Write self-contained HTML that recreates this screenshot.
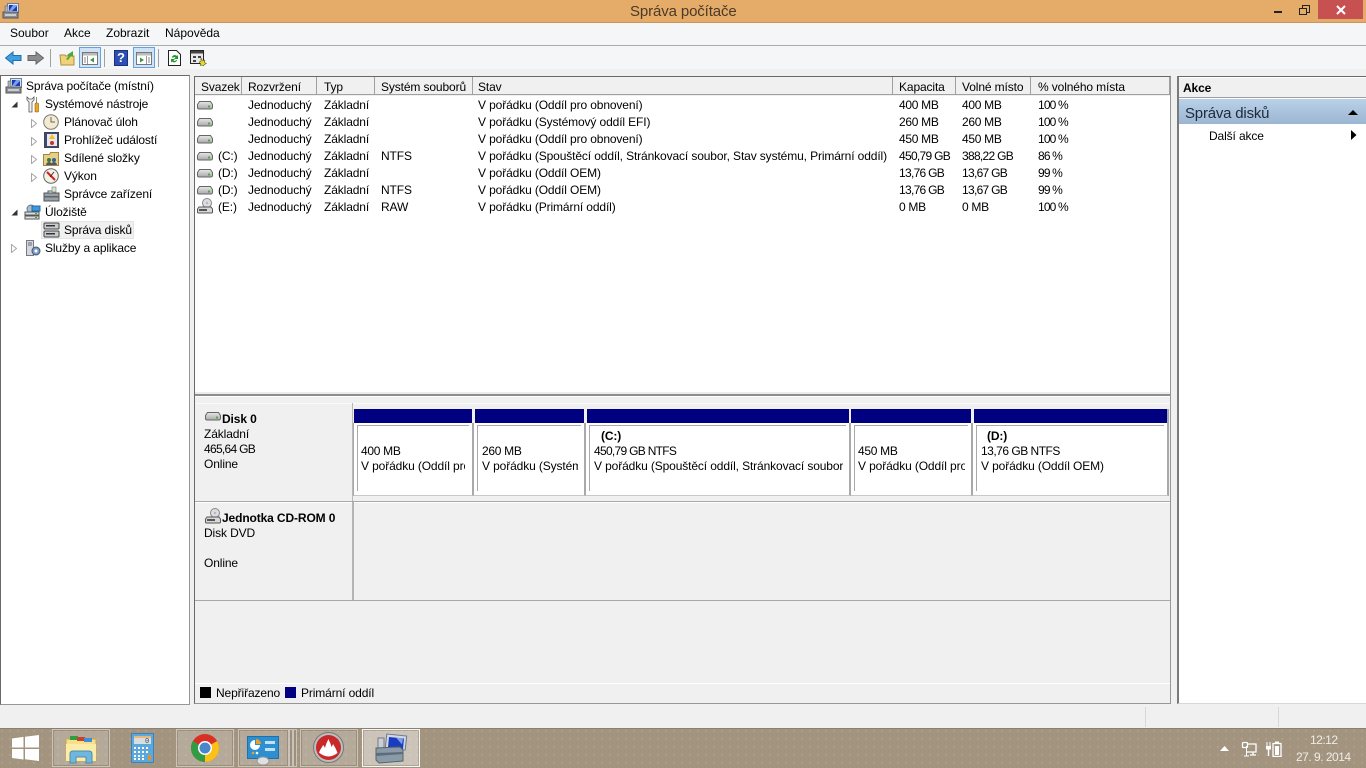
<!DOCTYPE html>
<html lang="cs"><head><meta charset="utf-8"><title>Správa počítače</title>
<style>
html,body{margin:0;padding:0;width:1366px;height:768px;overflow:hidden;background:#f0f0f0}
body{font:12px "Liberation Sans",sans-serif;color:#000;position:relative}
div,span,svg{position:absolute}
.t{white-space:nowrap;line-height:15px;height:15px;letter-spacing:-.12px}
.m{letter-spacing:0}
.n{letter-spacing:-.7px}
.s{letter-spacing:-.3px}
.p{letter-spacing:-.85px}
.c{overflow:hidden}
.b{font-weight:bold}
.hd{top:77px;height:18px;background:#f0f0f0;border-right:1px solid #a0a0a0;border-bottom:1px solid #a0a0a0;box-sizing:border-box}
.tb{top:729px;height:38px;background:rgba(255,255,255,.2);border:1px solid rgba(255,255,255,.32);outline:1px solid rgba(80,70,55,.25);outline-offset:-2px;box-sizing:border-box}
.navy{background:#000080;top:409px;height:14px}
.part{top:423px;height:73px;background:#fff;border-right:2px solid #a9a9a9;border-bottom:1px solid #c8c8c8;box-sizing:border-box}
.in{left:3px;top:2px;right:3px;bottom:4px;border-left:1px solid #a9a9a9;border-top:1px solid #a9a9a9}
</style></head><body>
<svg width="0" height="0" style="left:0;top:0">
<defs>
<linearGradient id="hd" x1="0" y1="0" x2="0" y2="1"><stop offset="0" stop-color="#e8e8e8"/><stop offset="1" stop-color="#a8a8a8"/></linearGradient>
<symbol id="disk" viewBox="0 0 16 9"><path d="M2.500 .5h11l2 3v3a1.500 1.500 0 0 1-1.500 1.500H2A1.500 1.500 0 0 1 .5 6.500v-3z" fill="url(#hd)" stroke="#666"/><rect x="11" y="4.500" width="2" height="2" fill="#4caf3c"/></symbol>
<symbol id="cd" viewBox="0 0 16 16"><circle cx="10" cy="5" r="4.500" fill="#ddd" stroke="#888"/><circle cx="10" cy="5" r="1.200" fill="#c8a8d8"/><path d="M2 9h12l1.500 2v3a1 1 0 0 1-1 1H1.500a1 1 0 0 1-1-1v-3z" fill="#d8d8d8" stroke="#555"/><rect x="2" y="11" width="8" height="2" fill="#555"/></symbol>
<symbol id="mgmt" viewBox="0 0 17 16"><rect x="5.500" y=".5" width="11" height="9" fill="#dbe7f5" stroke="#6a7f99"/><rect x="7" y="2" width="8" height="6" fill="#1838b8"/><path d="M7 8l4-6h4v1l-5 5z" fill="#7aa0e8"/><rect x="1" y="9" width="15" height="6" fill="#8a9098" stroke="#555"/><rect x="3" y="3" width="3" height="6" fill="#aab2b8" stroke="#666" stroke-width=".6"/><rect x="3" y="11" width="11" height="2" fill="#c8ced4"/></symbol>
<symbol id="tool" viewBox="0 0 17 16"><rect x="1" y="7" width="15" height="8" fill="#98a0a8" stroke="#555"/><path d="M5 7V5h7v2" fill="none" stroke="#555"/><rect x="1" y="10" width="15" height="1.500" fill="#5e656c"/><rect x="9" y="1" width="4" height="5" fill="#d5e8c8" stroke="#777" stroke-width=".6"/></symbol>
</defs></svg>

<!-- Title bar -->
<div style="left:0;top:0;width:1366px;height:23px;background:#e5ab68;border-bottom:1px solid #c9965b;box-sizing:border-box"></div>
<svg style="left:2px;top:3px" width="17" height="16"><use href="#mgmt"/></svg>
<div class="t" style="left:630px;top:3px;font-size:15px;line-height:18px;height:18px;color:#4a3a28">Správa počítače</div>
<div style="left:1274px;top:11px;width:8px;height:2px;background:#222"></div>
<div style="left:1302px;top:5px;width:6px;height:6px;border:1px solid #222"></div>
<div style="left:1299px;top:8px;width:6px;height:5px;border:1.500px solid #222;background:#e5ab68"></div>
<div style="left:1318px;top:0;width:45px;height:19px;background:#c75050"></div>
<svg style="left:1336px;top:5px" width="10" height="10"><path d="M1 1l8 8M9 1l-8 8" stroke="#fff" stroke-width="2"/></svg>

<!-- Menu -->
<div style="left:0;top:23px;width:1366px;height:23px;background:#f5f6f7;border-bottom:1px solid #acacac;box-sizing:border-box"></div>
<div class="t m" style="left:10px;top:26px">Soubor</div>
<div class="t m" style="left:64px;top:26px">Akce</div>
<div class="t m" style="left:106px;top:26px">Zobrazit</div>
<div class="t m" style="left:165px;top:26px">Nápověda</div>

<!-- Toolbar -->
<div style="left:0;top:46px;width:1366px;height:23px;background:#f5f6f7"></div>
<svg style="left:5px;top:51px" width="17" height="14"><path d="M.5 7L8 1v3.500h8v5H8V13z" fill="#3f9fe0" stroke="#1f6fb0"/></svg>
<svg style="left:27px;top:51px" width="17" height="14"><path d="M16.500 7L9 1v3.500H1v5h8V13z" fill="#8c8c8c" stroke="#666"/></svg>
<div style="left:50px;top:49px;width:1px;height:18px;background:#a0a0a0"></div>
<svg style="left:59px;top:50px" width="17" height="16"><path d="M1 5h5l1 1h8v9H2z" fill="#f0d27a" stroke="#b09040"/><path d="M7 9l3-3-2-1 6-4v6l-2-1-3 4z" fill="#4aa83c"/></svg>
<div style="left:79px;top:47px;width:22px;height:21px;background:#cfe3f7;border:1px solid #62a2e4;box-sizing:border-box"></div>
<svg style="left:82px;top:52px" width="16" height="13"><rect x=".5" y=".5" width="15" height="12" fill="#fff" stroke="#777"/><rect x="1" y="1" width="14" height="2.500" fill="#bbb"/><path d="M5.500 4v8" stroke="#999"/><path d="M12 5.500v5l-4-2.500z" fill="#3a9a3a"/><path d="M2 6h2M2 8h2M2 10h2" stroke="#888"/></svg>
<div style="left:104px;top:49px;width:1px;height:18px;background:#a0a0a0"></div>
<div style="left:114px;top:50px;width:14px;height:16px;background:#2c4fb4;border:1px solid #1a2f80;box-sizing:border-box;color:#fff;font:bold 13px/14px 'Liberation Sans',sans-serif;text-align:center">?</div>
<div style="left:133px;top:47px;width:22px;height:21px;background:#cfe3f7;border:1px solid #62a2e4;box-sizing:border-box"></div>
<svg style="left:136px;top:52px" width="16" height="13"><rect x=".5" y=".5" width="15" height="12" fill="#fff" stroke="#777"/><rect x="1" y="1" width="14" height="2.500" fill="#bbb"/><path d="M10.500 4v8" stroke="#999"/><path d="M4 5.500v5l4-2.500z" fill="#3a9a3a"/><path d="M12 6h2M12 8h2M12 10h2" stroke="#888"/></svg>
<div style="left:158px;top:49px;width:1px;height:18px;background:#a0a0a0"></div>
<svg style="left:168px;top:50px" width="13" height="16"><path d="M.5.5h8l4 4v11H.5z" fill="#fff" stroke="#222"/><path d="M4 7a3 3 0 0 1 5-1l1-1v4H6l1.500-1.500A1.500 1.500 0 0 0 5 8zM9 10a3 3 0 0 1-5 1.500L3 12.500V9h4l-1.500 1.500A1.500 1.500 0 0 0 8 10z" fill="#1f9a30"/></svg>
<svg style="left:190px;top:50px" width="17" height="16"><rect x=".5" y=".5" width="13" height="13" fill="#e8e8e8" stroke="#222"/><rect x="1" y="1" width="12" height="2.500" fill="#444"/><path d="M3 6h3v2H3zM8 6h3v2H8zM3 10h3v2H3z" fill="#444"/><path d="M11 8l1.500 2.500L15 10l-.5 2.500 2 1-2 1-1 1.500-1.500-1-2 .5 .5-2-1.500-1.500 2-.5z" fill="#e8d820" stroke="#333" stroke-width=".5"/></svg>

<!-- Left tree pane -->
<div style="left:0;top:75px;width:190px;height:630px;background:#fff;border:1px solid #969696;border-top-color:#696969;border-left-color:#696969;box-sizing:border-box"></div>
<svg style="left:5px;top:78px" width="17" height="16"><use href="#mgmt"/></svg>
<div class="t" style="left:26px;top:79px">Správa počítače (místní)</div>
<svg style="left:11px;top:101px" width="7" height="7"><path d="M6.500 .5v6h-6z" fill="#333"/></svg>
<svg style="left:26px;top:96px" width="14" height="17"><path d="M1 1v3l2 2v10h3V6l2-2V1L6 3H3z" fill="#f2f2f2" stroke="#555" stroke-width=".8"/><path d="M10 1h1v6h-1z" fill="#888"/><rect x="9" y="7" width="3.500" height="9" rx="1" fill="#e8a820" stroke="#8a6000" stroke-width=".6"/></svg>
<div class="t" style="left:45px;top:97px">Systémové nástroje</div>
<svg style="left:31px;top:119px" width="6" height="9"><path d="M.5.5l5 4-5 4z" fill="#fff" stroke="#a6a6a6"/></svg>
<svg style="left:43px;top:114px" width="16" height="16"><circle cx="8" cy="8" r="7.300" fill="#f4ead0" stroke="#777"/><path d="M8 3v5h4" fill="none" stroke="#666"/></svg>
<div class="t" style="left:64px;top:115px">Plánovač úloh</div>
<svg style="left:31px;top:137px" width="6" height="9"><path d="M.5.5l5 4-5 4z" fill="#fff" stroke="#a6a6a6"/></svg>
<svg style="left:44px;top:132px" width="15" height="16"><rect x=".5" y=".5" width="14" height="15" fill="#3a4a88" stroke="#444"/><rect x="3" y="2" width="10" height="12" fill="#e8e8e8"/><path d="M8 2l3 5H5z" fill="#f0c020"/><circle cx="8" cy="11" r="2" fill="#c83030"/></svg>
<div class="t" style="left:64px;top:133px">Prohlížeč událostí</div>
<svg style="left:31px;top:155px" width="6" height="9"><path d="M.5.5l5 4-5 4z" fill="#fff" stroke="#a6a6a6"/></svg>
<svg style="left:43px;top:151px" width="16" height="15"><path d="M.5 3.500h6l1-2h8v13H.5z" fill="#e8cf85" stroke="#a08840"/><circle cx="6" cy="9" r="2" fill="#3a7a40"/><circle cx="11" cy="9" r="2" fill="#3060a0"/><path d="M3 14a3 3 0 0 1 6 0zM8 14a3 3 0 0 1 6 0z" fill="#556"/></svg>
<div class="t" style="left:64px;top:151px">Sdílené složky</div>
<svg style="left:31px;top:173px" width="6" height="9"><path d="M.5.5l5 4-5 4z" fill="#fff" stroke="#a6a6a6"/></svg>
<svg style="left:43px;top:168px" width="16" height="16"><circle cx="8" cy="8" r="7.300" fill="#f4f0e4" stroke="#666"/><path d="M4 4l8 8" stroke="#d02020" stroke-width="2"/><path d="M11 4L7 9" stroke="#333"/></svg>
<div class="t" style="left:64px;top:169px">Výkon</div>
<svg style="left:43px;top:186px" width="17" height="16"><use href="#tool"/></svg>
<div class="t" style="left:64px;top:187px">Správce zařízení</div>
<svg style="left:11px;top:209px" width="7" height="7"><path d="M6.500 .5v6h-6z" fill="#333"/></svg>
<svg style="left:24px;top:204px" width="17" height="16"><circle cx="7" cy="5" r="4" fill="#a8c0d0" stroke="#678"/><rect x="8" y="2" width="8" height="5" fill="#3898e0" stroke="#2868a0"/><rect x="1" y="8" width="14" height="3" fill="#e0e0e0" stroke="#555"/><rect x="1" y="12" width="14" height="3" fill="#e0e0e0" stroke="#555"/><rect x="11" y="9" width="2" height="1" fill="#3a3"/><rect x="11" y="13" width="2" height="1" fill="#3a3"/></svg>
<div class="t" style="left:45px;top:205px">Úložiště</div>
<div style="left:41px;top:221px;width:93px;height:18px;background:#f0f0f0;border:1px solid #e4e4e4;box-sizing:border-box"></div>
<svg style="left:43px;top:222px" width="17" height="16"><rect x="1" y="1" width="15" height="6" rx="1" fill="#c8ccd0" stroke="#444"/><rect x="1" y="9" width="15" height="6" rx="1" fill="#c8ccd0" stroke="#444"/><rect x="3" y="3" width="9" height="1.500" fill="#333"/><rect x="3" y="11" width="9" height="1.500" fill="#333"/></svg>
<div class="t" style="left:64px;top:223px">Správa disků</div>
<svg style="left:11px;top:244px" width="6" height="9"><path d="M.5.5l5 4-5 4z" fill="#fff" stroke="#a6a6a6"/></svg>
<svg style="left:26px;top:240px" width="15" height="16"><rect x=".5" y=".5" width="7" height="15" fill="#d4d8dc" stroke="#778"/><path d="M2 3h4M2 5h4" stroke="#667"/><circle cx="10" cy="11" r="4" fill="#7a9cc8" stroke="#456"/><circle cx="10" cy="11" r="1.500" fill="#fff"/></svg>
<div class="t" style="left:45px;top:241px">Služby a aplikace</div>

<!-- Center pane -->
<div style="left:194px;top:76px;width:977px;height:628px;background:#f0f0f0;border:1px solid #969696;border-top-color:#696969;border-left-color:#696969;box-sizing:border-box"></div>
<div style="left:195px;top:96px;width:975px;height:296px;background:#fff"></div>
<div class="hd" style="left:195px;width:47px"></div><div class="t" style="left:201px;top:80px">Svazek</div>
<div class="hd" style="left:242px;width:75px"></div><div class="t" style="left:248px;top:80px">Rozvržení</div>
<div class="hd" style="left:317px;width:58px"></div><div class="t" style="left:324px;top:80px">Typ</div>
<div class="hd" style="left:375px;width:98px"></div><div class="t" style="left:381px;top:80px">Systém souborů</div>
<div class="hd" style="left:473px;width:420px"></div><div class="t" style="left:478px;top:80px">Stav</div>
<div class="hd" style="left:893px;width:63px"></div><div class="t" style="left:899px;top:80px">Kapacita</div>
<div class="hd" style="left:956px;width:75px"></div><div class="t" style="left:962px;top:80px">Volné místo</div>
<div class="hd" style="left:1031px;width:139px"></div><div class="t" style="left:1038px;top:80px">% volného místa</div>

<svg style="left:197px;top:101px" width="16" height="9"><use href="#disk"/></svg>
<div class="t" style="left:248px;top:98px">Jednoduchý</div><div class="t" style="left:324px;top:98px">Základní</div><div class="t" style="left:478px;top:98px">V pořádku (Oddíl pro obnovení)</div><div class="t s" style="left:899px;top:98px">400 MB</div><div class="t s" style="left:962px;top:98px">400 MB</div><div class="t p" style="left:1038px;top:98px">100 %</div>

<svg style="left:197px;top:118px" width="16" height="9"><use href="#disk"/></svg>
<div class="t" style="left:248px;top:115px">Jednoduchý</div><div class="t" style="left:324px;top:115px">Základní</div><div class="t" style="left:478px;top:115px">V pořádku (Systémový oddíl EFI)</div><div class="t s" style="left:899px;top:115px">260 MB</div><div class="t s" style="left:962px;top:115px">260 MB</div><div class="t p" style="left:1038px;top:115px">100 %</div>

<svg style="left:197px;top:135px" width="16" height="9"><use href="#disk"/></svg>
<div class="t" style="left:248px;top:132px">Jednoduchý</div><div class="t" style="left:324px;top:132px">Základní</div><div class="t" style="left:478px;top:132px">V pořádku (Oddíl pro obnovení)</div><div class="t s" style="left:899px;top:132px">450 MB</div><div class="t s" style="left:962px;top:132px">450 MB</div><div class="t p" style="left:1038px;top:132px">100 %</div>

<svg style="left:197px;top:152px" width="16" height="9"><use href="#disk"/></svg><div class="t" style="left:218px;top:149px">(C:)</div>
<div class="t" style="left:248px;top:149px">Jednoduchý</div><div class="t" style="left:324px;top:149px">Základní</div><div class="t" style="left:381px;top:149px">NTFS</div><div class="t" style="left:478px;top:149px">V pořádku (Spouštěcí oddíl, Stránkovací soubor, Stav systému, Primární oddíl)</div><div class="t n" style="left:899px;top:149px">450,79 GB</div><div class="t n" style="left:962px;top:149px">388,22 GB</div><div class="t p" style="left:1038px;top:149px">86 %</div>

<svg style="left:197px;top:169px" width="16" height="9"><use href="#disk"/></svg><div class="t" style="left:218px;top:166px">(D:)</div>
<div class="t" style="left:248px;top:166px">Jednoduchý</div><div class="t" style="left:324px;top:166px">Základní</div><div class="t" style="left:478px;top:166px">V pořádku (Oddíl OEM)</div><div class="t n" style="left:899px;top:166px">13,76 GB</div><div class="t n" style="left:962px;top:166px">13,67 GB</div><div class="t p" style="left:1038px;top:166px">99 %</div>

<svg style="left:197px;top:186px" width="16" height="9"><use href="#disk"/></svg><div class="t" style="left:218px;top:183px">(D:)</div>
<div class="t" style="left:248px;top:183px">Jednoduchý</div><div class="t" style="left:324px;top:183px">Základní</div><div class="t" style="left:381px;top:183px">NTFS</div><div class="t" style="left:478px;top:183px">V pořádku (Oddíl OEM)</div><div class="t n" style="left:899px;top:183px">13,76 GB</div><div class="t n" style="left:962px;top:183px">13,67 GB</div><div class="t p" style="left:1038px;top:183px">99 %</div>

<svg style="left:197px;top:198px" width="16" height="16"><use href="#cd"/></svg><div class="t" style="left:218px;top:200px">(E:)</div>
<div class="t" style="left:248px;top:200px">Jednoduchý</div><div class="t" style="left:324px;top:200px">Základní</div><div class="t" style="left:381px;top:200px">RAW</div><div class="t" style="left:478px;top:200px">V pořádku (Primární oddíl)</div><div class="t s" style="left:899px;top:200px">0 MB</div><div class="t s" style="left:962px;top:200px">0 MB</div><div class="t p" style="left:1038px;top:200px">100 %</div>

<!-- Splitter -->
<div style="left:195px;top:392px;width:975px;height:4px;background:#ececec;border-bottom:2px solid #8e8e8e;box-sizing:border-box"></div>
<div style="left:195px;top:396px;width:975px;height:1px;background:#fff"></div>

<!-- Disk 0 -->
<div style="left:195px;top:403px;width:975px;height:1px;background:#fafafa"></div>
<div style="left:352px;top:403px;width:1px;height:99px;background:#b8b8b8"></div>
<div style="left:195px;top:501px;width:975px;height:1px;background:#a8a8a8"></div>
<div style="left:195px;top:502px;width:975px;height:1px;background:#fff"></div>
<svg style="left:205px;top:412px" width="16" height="9"><use href="#disk"/></svg>
<div class="t b" style="left:222px;top:412px">Disk 0</div>
<div class="t" style="left:204px;top:427px">Základní</div>
<div class="t n" style="left:204px;top:442px">465,64 GB</div>
<div class="t" style="left:204px;top:457px">Online</div>

<div class="navy" style="left:354px;width:118px"></div>
<div class="navy" style="left:475px;width:109px"></div>
<div class="navy" style="left:587px;width:262px"></div>
<div class="navy" style="left:851px;width:120px"></div>
<div class="navy" style="left:974px;width:193px"></div>

<div style="left:353px;top:423px;width:1px;height:73px;background:#a9a9a9"></div>
<div class="part" style="left:354px;width:120px"><div class="in"></div></div>
<div class="part" style="left:474px;width:112px"><div class="in"></div></div>
<div class="part" style="left:586px;width:265px"><div class="in"></div></div>
<div class="part" style="left:851px;width:122px"><div class="in"></div></div>
<div class="part" style="left:973px;width:196px"><div class="in"></div></div>
<div style="left:1167px;top:409px;width:2px;height:14px;background:#a8a8a8"></div>

<div class="t s" style="left:361px;top:444px">400 MB</div>
<div class="t c" style="left:361px;top:459px;width:104px">V pořádku (Oddíl pro obnovení)</div>
<div class="t s" style="left:482px;top:444px">260 MB</div>
<div class="t c" style="left:482px;top:459px;width:96px">V pořádku (Systémový oddíl EFI)</div>
<div class="t b" style="left:601px;top:429px">(C:)</div>
<div class="t n" style="left:594px;top:444px">450,79 GB NTFS</div>
<div class="t c" style="left:594px;top:459px;width:249px">V pořádku (Spouštěcí oddíl, Stránkovací soubor, Stav systému)</div>
<div class="t s" style="left:858px;top:444px">450 MB</div>
<div class="t c" style="left:858px;top:459px;width:107px">V pořádku (Oddíl pro obnovení)</div>
<div class="t b" style="left:987px;top:429px">(D:)</div>
<div class="t" style="left:981px;top:444px;letter-spacing:-.5px">13,76 GB NTFS</div>
<div class="t" style="left:981px;top:459px">V pořádku (Oddíl OEM)</div>

<!-- CD row -->
<div style="left:352px;top:502px;width:2px;height:99px;background:#b4b4b4"></div>
<div style="left:195px;top:600px;width:975px;height:1px;background:#a8a8a8"></div>
<svg style="left:205px;top:508px" width="16" height="16"><use href="#cd"/></svg>
<div class="t b" style="left:222px;top:511px">Jednotka CD-ROM 0</div>
<div class="t" style="left:204px;top:526px">Disk DVD</div>
<div class="t" style="left:204px;top:556px">Online</div>

<!-- Legend -->
<div style="left:195px;top:683px;width:975px;height:1px;background:#fff"></div>
<div style="left:200px;top:687px;width:11px;height:11px;background:#000"></div>
<div class="t" style="left:216px;top:686px">Nepřiřazeno</div>
<div style="left:285px;top:687px;width:11px;height:11px;background:#000080"></div>
<div class="t" style="left:301px;top:686px">Primární oddíl</div>

<!-- Right pane -->
<div style="left:1177px;top:76px;width:189px;height:628px;background:#fff;border-top:1px solid #696969;border-left:2px solid #7a7a7a;border-bottom:1px solid #d8d8d8;box-sizing:border-box"></div>
<div style="left:1179px;top:78px;width:187px;height:20px;background:#f0f0f0;border-bottom:1px solid #a0a0a0;box-sizing:border-box"></div>
<div class="t b" style="left:1183px;top:81px">Akce</div>
<div style="left:1179px;top:99px;width:187px;height:25px;background:linear-gradient(#b9d1e8,#9cb5d2)"></div>
<div class="t" style="left:1185px;top:105px;font-size:15px;line-height:18px;height:18px;color:#1e2a3a;letter-spacing:-.2px">Správa disků</div>
<svg style="left:1348px;top:110px" width="10" height="6"><path d="M5 0l5 5H0z" fill="#000"/></svg>
<div class="t" style="left:1209px;top:129px">Další akce</div>
<svg style="left:1351px;top:130px" width="6" height="10"><path d="M0 0l5.500 5L0 10z" fill="#000"/></svg>

<!-- Status bar -->
<div style="left:0;top:705px;width:1366px;height:23px;background:#f0f0f0"></div>
<div style="left:1145px;top:707px;width:1px;height:20px;background:#d8d8d8"></div>
<div style="left:1278px;top:707px;width:1px;height:20px;background:#d8d8d8"></div>

<!-- Taskbar -->
<div style="left:0;top:728px;width:1366px;height:40px;background-color:#a39480;background-image:radial-gradient(circle at 2px 2px,#aea18e 0.9px,transparent 1.1px);background-size:8px 8px;border-top:1px solid #8e8070;box-sizing:border-box"></div>
<svg style="left:12px;top:735px" width="27" height="26"><path d="M0 3.500l11.500-1.600v10.600H0zM13 1.700L27 0v12.500H13zM0 14h11.500v10.500L0 23zM13 14h14v12l-14-1.800z" fill="#fff"/></svg>
<div class="tb" style="left:52px;width:58px"></div>
<div class="tb" style="left:176px;width:58px"></div>
<div class="tb" style="left:238px;width:51px"></div>
<div class="tb" style="left:289px;width:4px"></div>
<div class="tb" style="left:293px;width:4px"></div>
<div class="tb" style="left:300px;width:58px"></div>
<div class="tb" style="left:362px;width:58px;background:rgba(255,255,255,.45);border-color:rgba(255,255,255,.85)"></div>

<svg style="left:65px;top:735px" width="33" height="29"><path d="M1 4h9l1-1 10 0 2 1h8v22H1z" fill="#f6df8e" stroke="#c8a850"/><rect x="5" y="1" width="8" height="4" fill="#2f9e3f"/><rect x="12" y="2" width="8" height="4" fill="#c8402e"/><rect x="19" y="3" width="8" height="4" fill="#3f8fd8"/><path d="M1 9h30v17H1z" fill="#fbeca8"/><path d="M5 28V19q0-3 3-3h16q3 0 3 3v9h-6v-6H11v6z" fill="#6fb7de" stroke="#4d8cb3"/></svg>
<svg style="left:131px;top:733px" width="24" height="31"><rect x=".5" y=".5" width="22" height="29" fill="#5aa8dc" stroke="#3f80b8"/><rect x="3" y="3" width="17" height="8" fill="#d8dee0"/><path d="M3 3h17v2H3z" fill="#e8b878"/><text x="14" y="10" font-family="Liberation Mono,monospace" font-size="7" fill="#445">0</text><path d="M3 14h2v2H3zM7 14h2v2H7zM11 14h2v2h-2zM15 14h2v2h-2zM3 18h2v2H3zM7 18h2v2H7zM11 18h2v2h-2zM15 18h2v2h-2zM3 22h2v2H3zM7 22h2v2H7zM11 22h2v2h-2zM3 25h2v2H3zM7 25h2v2H7zM11 25h2v2h-2z" fill="#fff"/><rect x="17" y="22" width="3" height="5" fill="#e89020"/></svg>
<svg style="left:191px;top:734px" width="28" height="28"><circle cx="14" cy="14" r="14" fill="#d93025"/><path d="M14 14L26.100 7A14 14 0 0 1 14 28z" fill="#fbc116"/><path d="M14 14L14 28A14 14 0 0 1 1.900 7z" fill="#349b45"/><circle cx="14" cy="14" r="7" fill="#fff"/><circle cx="14" cy="14" r="5.500" fill="#4a86cc"/></svg>
<svg style="left:247px;top:736px" width="32" height="29"><rect x=".5" y=".5" width="31" height="22" fill="#2e8fd0" stroke="#1f6fa8"/><path d="M8 4v5h5a5 5 0 1 1-5-5z" fill="#fff"/><path d="M9 3a5 5 0 0 1 5 5H9z" fill="#e8a030"/><path d="M18 5h10v3H18zM18 12h10v3H18z" fill="#bfe0f5"/><circle cx="6" cy="17" r="1.300" fill="#e8a030"/><circle cx="10" cy="17" r="1.300" fill="#fff"/><ellipse cx="16" cy="25" rx="6" ry="4" fill="#e0e0e0" stroke="#999"/></svg>
<svg style="left:313px;top:732px" width="31" height="31"><circle cx="15.500" cy="15.500" r="15" fill="#bdbdbd" stroke="#777"/><circle cx="15.500" cy="15.500" r="12.500" fill="#c8282a"/><path d="M6 21c1-4 3-5 4-8 1 1 1.500 2 2 3 .5-3 2-6 3.500-9 1 3 2.500 5 3 8 .8-1 1.200-2 1.500-3 2 3 3.500 6 4.500 9q-9 7-18 0z" fill="#fff"/></svg>
<svg style="left:374px;top:732px" width="34" height="32"><rect x="12" y="3" width="20" height="14" transform="rotate(6 22 10)" fill="#cfd8e4" stroke="#6b7a8c"/><path d="M15 5l15 1.500-1 10.500-15-1.500z" fill="#1a3cc0"/><path d="M22 5.500l7 1-1 6z" fill="#7fa0e8"/><rect x="4" y="6" width="6" height="11" fill="#c8d0d4" stroke="#778"/><path d="M2 16l24-1 3 3v11l-24 2-3-3z" fill="#8a9aa8" stroke="#566"/><path d="M2 21l27-1v2L2 24z" fill="#5c6c7a"/></svg>

<!-- Tray -->
<svg style="left:1220px;top:746px" width="9" height="6"><path d="M4.500 0L9 5H0z" fill="#fff"/></svg>
<svg style="left:1241px;top:741px" width="17" height="16"><path d="M5.500 5V15M3 15h5" stroke="#fff" fill="none"/><rect x="1.500" y="1.500" width="5" height="5" rx="1" fill="none" stroke="#fff" stroke-width="1.300"/><path d="M6.500 3H15v8H6M9 14h6M12 11v3" stroke="#fff" stroke-width="1.300" fill="none"/></svg>
<svg style="left:1265px;top:741px" width="17" height="16"><path d="M2 1v4M5 1v4" stroke="#fff"/><rect x="1" y="5" width="5" height="3.500" fill="#fff"/><path d="M3.500 8.500V15" stroke="#fff" stroke-width="1.400"/><rect x="8" y="2.500" width="8" height="13" fill="none" stroke="#fff" stroke-width="1.300"/><rect x="10" y="5" width="4" height="9" fill="#fff"/><rect x="10" y="0.500" width="4" height="2" fill="#fff"/></svg>
<div class="t" style="left:1310px;top:733px;color:#f0ece4;letter-spacing:-.5px">12:12</div>
<div class="t" style="left:1296px;top:750px;color:#f0ece4;letter-spacing:-.5px">27. 9. 2014</div>
</body></html>
